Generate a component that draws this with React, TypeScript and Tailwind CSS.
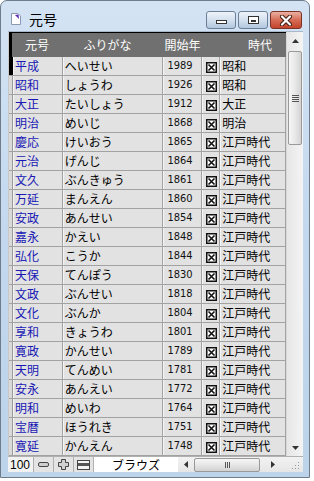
import React from 'react'

const ROWS = [
  ['平成', 'へいせい', '1989', '昭和'],
  ['昭和', 'しょうわ', '1926', '昭和'],
  ['大正', 'たいしょう', '1912', '大正'],
  ['明治', 'めいじ', '1868', '明治'],
  ['慶応', 'けいおう', '1865', '江戸時代'],
  ['元治', 'げんじ', '1864', '江戸時代'],
  ['文久', 'ぶんきゅう', '1861', '江戸時代'],
  ['万延', 'まんえん', '1860', '江戸時代'],
  ['安政', 'あんせい', '1854', '江戸時代'],
  ['嘉永', 'かえい', '1848', '江戸時代'],
  ['弘化', 'こうか', '1844', '江戸時代'],
  ['天保', 'てんぽう', '1830', '江戸時代'],
  ['文政', 'ぶんせい', '1818', '江戸時代'],
  ['文化', 'ぶんか', '1804', '江戸時代'],
  ['享和', 'きょうわ', '1801', '江戸時代'],
  ['寛政', 'かんせい', '1789', '江戸時代'],
  ['天明', 'てんめい', '1781', '江戸時代'],
  ['安永', 'あんえい', '1772', '江戸時代'],
  ['明和', 'めいわ', '1764', '江戸時代'],
  ['宝暦', 'ほうれき', '1751', '江戸時代'],
  ['寛延', 'かんえん', '1748', '江戸時代'],
]

const JP = "font-['Noto_Sans_CJK_JP',sans-serif]"

function CheckX() {
  return (
    <svg width="11" height="11" viewBox="0 0 11 11">
      <rect x="0.75" y="0.75" width="9.5" height="9.5" fill="white" stroke="#111" strokeWidth="1.5" />
      <path d="M2.5 2.5 L8.5 8.5 M8.5 2.5 L2.5 8.5" stroke="#111" strokeWidth="1.6" />
    </svg>
  )
}

function TitleButtons() {
  return (
    <div className="flex gap-[2px] mt-[10px] mr-[7px]">
      <div className="w-[30px] h-[18px] rounded-[3px] border border-[#6c7f97] bg-gradient-to-b from-[#eef3f9] via-[#d3e0ee] to-[#b3c7df] flex items-end justify-center pb-[4px]">
        <div className="w-[11px] h-[4px] bg-white border border-[#333]" />
      </div>
      <div className="w-[30px] h-[18px] rounded-[3px] border border-[#6c7f97] bg-gradient-to-b from-[#eef3f9] via-[#d3e0ee] to-[#b3c7df] flex items-center justify-center">
        <div className="w-[11px] h-[8px] bg-white border border-[#333] flex items-center justify-center">
          <div className="w-[5px] h-[2px] bg-[#333] mt-[1px]" />
        </div>
      </div>
      <div className="w-[32px] h-[18px] rounded-[3px] border border-[#7d3426] bg-gradient-to-b from-[#eab0a2] via-[#d66c55] to-[#c2432a] flex items-center justify-center">
        <svg width="14" height="11" viewBox="0 0 14 11">
          <path d="M3 1.5 L11 9.5 M11 1.5 L3 9.5" stroke="#3a1a12" strokeWidth="4" strokeLinecap="round" />
          <path d="M3 1.5 L11 9.5 M11 1.5 L3 9.5" stroke="white" strokeWidth="2.2" strokeLinecap="round" />
        </svg>
      </div>
    </div>
  )
}

function VScroll() {
  return (
    <div className="w-[17px] flex flex-col bg-gradient-to-r from-[#e6e6e6] to-[#f4f4f4] border-l border-[#d8d8d8]">
      <div className="h-[17px] flex items-center justify-center">
        <svg width="7" height="4" viewBox="0 0 7 4"><path d="M0 4 L3.5 0 L7 4 Z" fill="#333" /></svg>
      </div>
      <div className="h-[94px] mx-[1px] mt-[2px] rounded-[2px] border border-[#999] bg-gradient-to-r from-[#f6f6f6] via-[#e8e8e8] to-[#d4d4d4] flex flex-col items-center justify-center gap-[1px]">
        <div className="w-[7px] h-[1px] bg-[#555]" />
        <div className="w-[7px] h-[1px] bg-[#555]" />
        <div className="w-[7px] h-[1px] bg-[#555]" />
        <div className="w-[7px] h-[1px] bg-[#555]" />
      </div>
      <div className="flex-1" />
      <div className="h-[17px] flex items-center justify-center">
        <svg width="7" height="4" viewBox="0 0 7 4"><path d="M0 0 L3.5 4 L7 0 Z" fill="#333" /></svg>
      </div>
    </div>
  )
}

function Row({ r, active }: { r: string[]; active: boolean }) {
  const cell = 'h-full flex items-center border-r border-r-[#a2a2a2] border-l border-l-[#f4f4f4] bg-[#e2e2e2]'
  return (
    <div className="h-[19px] flex border-b border-[#a2a2a2]">
      <div className={active ? 'w-[4px] bg-black' : 'w-[4px] bg-[#d9d9d9] border-r border-[#9a9a9a]'} />
      <div className={`${cell} w-[50px] pl-[1px] text-[12px] text-[#1818b4] ${JP}`}>{r[0]}</div>
      <div className={`${cell} w-[101px] pl-[1px] text-[12px] text-black ${JP}`}>{r[1]}</div>
      <div className={`${cell} w-[39px] pl-[3px] text-[11px] text-[#111] font-['DejaVu_Sans_Condensed','Liberation_Sans',sans-serif]`}>{r[2]}</div>
      <div className={`${cell} w-[18px] justify-center pt-[3px]`}><CheckX /></div>
      <div className={`${cell} w-[66px] pl-[1px] text-[12px] text-black ${JP}`}>{r[3]}</div>
    </div>
  )
}

export default function App() {
  return (
    <div className="w-[314px] h-[481px] bg-white overflow-hidden">
      <div className="w-[310px] h-[478px] rounded-t-[7px] border border-[#6e7c8c] bg-gradient-to-b from-[#d3e3f4] via-[#c3d8ee] to-[#bcd3ea] flex flex-col">
        {/* Title bar */}
        <div className="h-[30px] flex items-start justify-between">
          <div className="flex items-center gap-[8px] pl-[10px] pt-[11px]">
            <svg width="10" height="12" viewBox="0 0 10 12">
              <path d="M0.5 0.5 H7 L9.5 3 V11.5 H0.5 Z" fill="white" stroke="#8a9ab0" />
              <path d="M4 2 L7.5 1.5 L8 6 Z" fill="#5a2bb8" />
            </svg>
            <span className={`text-[14px] text-black leading-none ${JP}`}>元号</span>
          </div>
          <TitleButtons />
        </div>

        {/* Client area */}
        <div className="ml-[7px] mr-[6px] h-[441px] flex flex-col bg-[#e8e8e8] border-t border-[#a9b8c8]">
          <div className="flex h-[424px]">
            <div className="w-[278px] flex flex-col bg-[#d6d6d6] border-l border-[#c8c8c8]">
              {/* Header */}
              <div className={`h-[25px] flex bg-[#707070] border-t border-black text-white text-[12px] ${JP}`}>
                <div className="w-[3px] bg-black" />
                <div className="w-[50px] flex items-center justify-center">元号</div>
                <div className="w-[101px] flex items-center justify-center pr-[10px]">ふりがな</div>
                <div className="w-[39px] flex items-center justify-center">開始年</div>
                <div className="w-[84px] flex items-center pl-[46px]">時代</div>
              </div>
              {ROWS.map((r, i) => (
                <Row key={r[0] + i} r={r} active={i === 0} />
              ))}
            </div>
            <VScroll />
          </div>

          {/* Bottom bar */}
          <div className="h-[16px] flex items-stretch bg-[#e4e4e4] border-t border-[#b0b0b0]">
            <div className="w-[26px] flex items-center pl-[2px] text-[12px] text-black font-['Liberation_Sans',sans-serif] border-r border-[#b0b0b0] bg-[#f2f2f2]">100</div>
            <div className="w-[20px] flex items-center justify-center border-r border-[#b0b0b0]">
              <div className="w-[11px] h-[5px] rounded-[2px] border border-[#444] bg-[#cfcfcf]" />
            </div>
            <div className="w-[20px] flex items-center justify-center border-r border-[#b0b0b0]">
              <svg width="11" height="11" viewBox="0 0 11 11">
                <path d="M3.5 0.5 H7.5 V3.5 H10.5 V7.5 H7.5 V10.5 H3.5 V7.5 H0.5 V3.5 H3.5 Z" fill="#d0d0d0" stroke="#444" />
              </svg>
            </div>
            <div className="w-[20px] flex items-center justify-center border-r border-[#b0b0b0]">
              <div className="w-[13px] h-[10px] border border-[#444] bg-[#f4f4f4] flex flex-col">
                <div className="h-[3px] bg-[#555] mt-[2px]" />
              </div>
            </div>
            <div className={`w-[84px] flex items-center justify-center bg-white text-[12px] text-black ${JP}`}>ブラウズ</div>
            <div className="flex-1 flex items-center bg-gradient-to-b from-[#f2f2f2] to-[#e6e6e6]">
              <div className="w-[16px] flex justify-center">
                <svg width="4" height="7" viewBox="0 0 4 7"><path d="M4 0 L0 3.5 L4 7 Z" fill="#333" /></svg>
              </div>
              <div className="w-[66px] h-[14px] rounded-[2px] border border-[#999] bg-gradient-to-b from-[#f6f6f6] via-[#e6e6e6] to-[#d2d2d2] flex items-center justify-center gap-[1px]">
                <div className="w-[1px] h-[6px] bg-[#555]" />
                <div className="w-[1px] h-[6px] bg-[#555]" />
                <div className="w-[1px] h-[6px] bg-[#555]" />
              </div>
              <div className="flex-1 flex justify-center">
                <svg width="4" height="7" viewBox="0 0 4 7"><path d="M0 0 L4 3.5 L0 7 Z" fill="#333" /></svg>
              </div>
              <div className="w-[17px] h-full flex items-end justify-end pr-[3px] pb-[2px]">
                <svg width="8" height="8" viewBox="0 0 8 8">
                  <rect x="6" y="0" width="1" height="1" fill="#999" />
                  <rect x="3" y="3" width="1" height="1" fill="#999" />
                  <rect x="6" y="3" width="1" height="1" fill="#999" />
                  <rect x="0" y="6" width="1" height="1" fill="#999" />
                  <rect x="3" y="6" width="1" height="1" fill="#999" />
                  <rect x="6" y="6" width="1" height="1" fill="#999" />
                </svg>
              </div>
            </div>
          </div>
        </div>
      </div>
    </div>
  )
}
